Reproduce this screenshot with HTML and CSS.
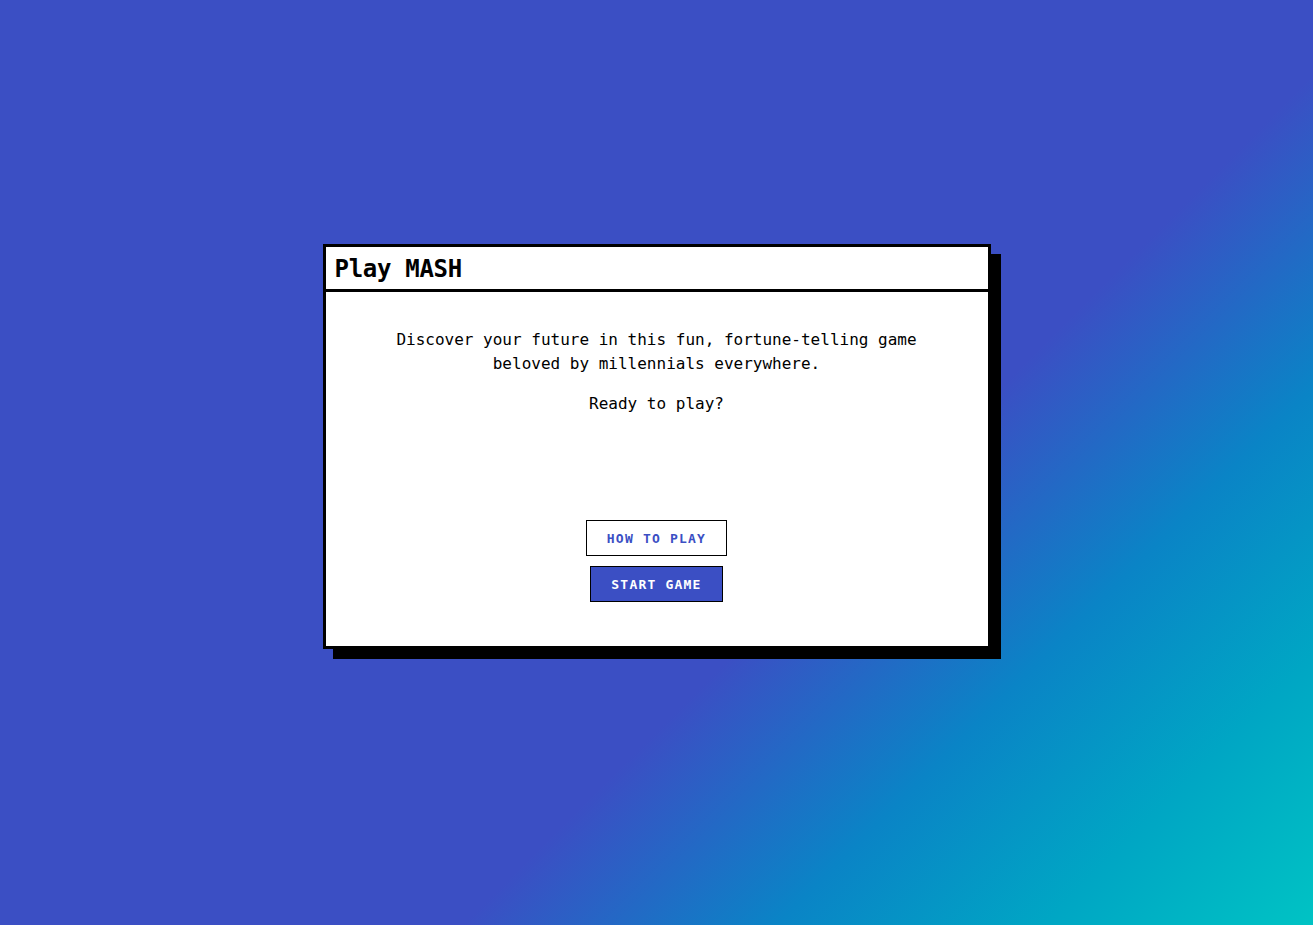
FILE: index.html
```html
<!DOCTYPE html>
<html lang="en">
<head>
<meta charset="utf-8">
<title>Play MASH</title>
<link rel="stylesheet" href="styles.css">
</head>
<body>
<main class="stage">
  <section class="window">
    <header class="window-header">
      <h1 class="window-title">Play MASH</h1>
    </header>
    <div class="window-body">
      <p class="intro">Discover your future in this fun, fortune-telling game beloved by millennials everywhere.</p>
      <p class="prompt">Ready to play?</p>
      <div class="actions">
        <button class="btn btn-outline" type="button">HOW TO PLAY</button>
        <button class="btn btn-primary" type="button">START GAME</button>
      </div>
    </div>
  </section>
</main>
</body>
</html>
```
FILE: styles.css
```css
html, body {
  margin: 0;
  padding: 0;
  height: 100%;
}

body {
  font-family: "DejaVu Sans Mono", "Liberation Mono", monospace;
  color: #000;
  background: linear-gradient(135deg, #3b4fc4 0%, #3b4fc4 62%, #0a84c6 76%, #00a6c4 88%, #00c3c4 100%);
  min-height: 925px;
}

.stage {
  display: flex;
  justify-content: center;
  padding-top: 244px;
}

.window {
  width: 662px;
  background: #fff;
  border: 3px solid #000;
  box-shadow: 10px 10px 0 #000;
}

.window-header {
  box-sizing: border-box;
  height: 45px;
  border-bottom: 3px solid #000;
  display: flex;
  align-items: center;
  padding: 2px 10px 0 9px;
}

.window-title {
  margin: 0;
  font-size: 24px;
  font-weight: bold;
  letter-spacing: -0.3px;
  line-height: 1;
}

.window-body {
  padding: 36px 60px 44px;
  display: flex;
  flex-direction: column;
  align-items: center;
  text-align: center;
}

.intro {
  margin: 0;
  max-width: 540px;
  font-size: 16px;
  line-height: 24px;
}

.prompt {
  margin: 16px 0 0;
  font-size: 16px;
  line-height: 24px;
}

.actions {
  margin-top: 104px;
  display: flex;
  flex-direction: column;
  align-items: center;
  gap: 10px;
}

.btn {
  font-family: "DejaVu Sans Mono", "Liberation Mono", monospace;
  font-size: 13px;
  font-weight: bold;
  letter-spacing: 1.2px;
  height: 36px;
  padding: 0 20px;
  border: 1px solid #000;
  border-radius: 0;
  cursor: pointer;
}

.btn-outline {
  background: #fff;
  color: #3b4fc4;
}

.btn-primary {
  background: #3b4fc4;
  color: #fff;
}
```
